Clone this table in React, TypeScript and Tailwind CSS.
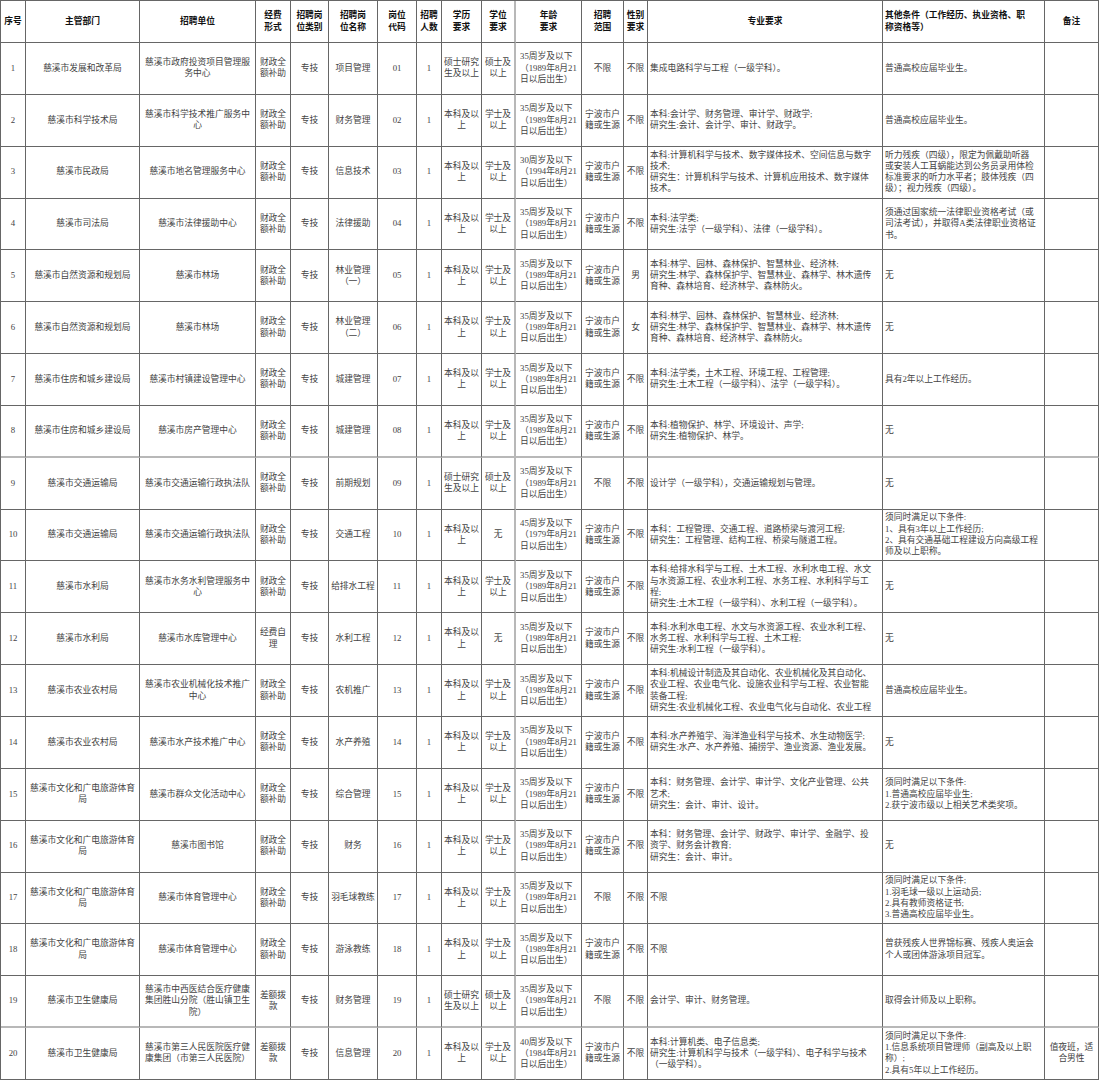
const A35 = "35周岁及以下\n（1989年8月21\n日以后出生）";
const CZ = "财政全\n额补助";
const BK = "本科及以\n上";
const XS = "学士及\n以上";
const SS = "硕士研究\n生及以上";
const SW = "硕士及\n以上";
const NB = "宁波市户\n籍或生源";
const WH = "慈溪市文化和广电旅游体育\n局";

const header = [
  "序号",
  "主管部门",
  "招聘单位",
  "经费\n形式",
  "招聘岗\n位类别",
  "招聘岗\n位名称",
  "岗位\n代码",
  "招聘\n人数",
  "学历\n要求",
  "学位\n要求",
  "年龄\n要求",
  "招聘\n范围",
  "性别\n要求",
  "专业要求",
  "其他条件（工作经历、执业资格、职\n称资格等）",
  "备注",
];

const rows: string[][] = [
  ["1", "慈溪市发展和改革局", "慈溪市政府投资项目管理服\n务中心", CZ, "专技", "项目管理", "01", "1", SS, SW, A35, "不限", "不限", "集成电路科学与工程（一级学科）。", "普通高校应届毕业生。", ""],
  ["2", "慈溪市科学技术局", "慈溪市科学技术推广服务中\n心", CZ, "专技", "财务管理", "02", "1", BK, XS, A35, NB, "不限", "本科:会计学、财务管理、审计学、财政学;\n研究生:会计、会计学、审计、财政学。", "普通高校应届毕业生。", ""],
  ["3", "慈溪市民政局", "慈溪市地名管理服务中心", CZ, "专技", "信息技术", "03", "1", BK, XS, "30周岁及以下\n（1994年8月21\n日以后出生）", NB, "不限", "本科:计算机科学与技术、数字媒体技术、空间信息与数字\n技术;\n研究生：计算机科学与技术、计算机应用技术、数字媒体\n技术。", "听力残疾（四级），限定为佩戴助听器\n或安装人工耳蜗能达到公务员录用体检\n标准要求的听力水平者；肢体残疾（四\n级）；视力残疾（四级）。", ""],
  ["4", "慈溪市司法局", "慈溪市法律援助中心", CZ, "专技", "法律援助", "04", "1", BK, XS, A35, NB, "不限", "本科:法学类;\n研究生:法学（一级学科）、法律（一级学科）。", "须通过国家统一法律职业资格考试（或\n司法考试），并取得A类法律职业资格证\n书。", ""],
  ["5", "慈溪市自然资源和规划局", "慈溪市林场", CZ, "专技", "林业管理\n（一）", "05", "1", BK, XS, A35, NB, "男", "本科:林学、园林、森林保护、智慧林业、经济林;\n研究生:林学、森林保护学、智慧林业、森林学、林木遗传\n育种、森林培育、经济林学、森林防火。", "无", ""],
  ["6", "慈溪市自然资源和规划局", "慈溪市林场", CZ, "专技", "林业管理\n（二）", "06", "1", BK, XS, A35, NB, "女", "本科:林学、园林、森林保护、智慧林业、经济林;\n研究生:林学、森林保护学、智慧林业、森林学、林木遗传\n育种、森林培育、经济林学、森林防火。", "无", ""],
  ["7", "慈溪市住房和城乡建设局", "慈溪市村镇建设管理中心", CZ, "专技", "城建管理", "07", "1", BK, XS, A35, NB, "不限", "本科:法学类，土木工程、环境工程、工程管理;\n研究生:土木工程（一级学科）、法学（一级学科）。", "具有2年以上工作经历。", ""],
  ["8", "慈溪市住房和城乡建设局", "慈溪市房产管理中心", CZ, "专技", "城建管理", "08", "1", BK, XS, A35, NB, "不限", "本科:植物保护、林学、环境设计、声学;\n研究生:植物保护、林学。", "无", ""],
  ["9", "慈溪市交通运输局", "慈溪市交通运输行政执法队", CZ, "专技", "前期规划", "09", "1", SS, SW, A35, "不限", "不限", "设计学（一级学科），交通运输规划与管理。", "无", ""],
  ["10", "慈溪市交通运输局", "慈溪市交通运输行政执法队", CZ, "专技", "交通工程", "10", "1", BK, "无", "45周岁及以下\n（1979年8月21\n日以后出生）", NB, "不限", "本科：工程管理、交通工程、道路桥梁与渡河工程;\n研究生：工程管理、结构工程、桥梁与隧道工程。", "须同时满足以下条件:\n1、具有3年以上工作经历;\n2、具有交通基础工程建设方向高级工程\n师及以上职称。", ""],
  ["11", "慈溪市水利局", "慈溪市水务水利管理服务中\n心", CZ, "专技", "给排水工程", "11", "1", BK, XS, A35, NB, "不限", "本科:给排水科学与工程、土木工程、水利水电工程、水文\n与水资源工程、农业水利工程、水务工程、水利科学与工\n程;\n研究生:土木工程（一级学科）、水利工程（一级学科）。", "无", ""],
  ["12", "慈溪市水利局", "慈溪市水库管理中心", "经费自\n理", "专技", "水利工程", "12", "1", BK, "无", A35, NB, "不限", "本科:水利水电工程、水文与水资源工程、农业水利工程、\n水务工程、水利科学与工程、土木工程;\n研究生:水利工程（一级学科）。", "无", ""],
  ["13", "慈溪市农业农村局", "慈溪市农业机械化技术推广\n中心", CZ, "专技", "农机推广", "13", "1", BK, XS, A35, NB, "不限", "本科:机械设计制造及其自动化、农业机械化及其自动化、\n农业工程、农业电气化、设施农业科学与工程、农业智能\n装备工程;\n研究生:农业机械化工程、农业电气化与自动化、农业工程", "普通高校应届毕业生。", ""],
  ["14", "慈溪市农业农村局", "慈溪市水产技术推广中心", CZ, "专技", "水产养殖", "14", "1", BK, XS, A35, NB, "不限", "本科:水产养殖学、海洋渔业科学与技术、水生动物医学;\n研究生:水产、水产养殖、捕捞学、渔业资源、渔业发展。", "无", ""],
  ["15", WH, "慈溪市群众文化活动中心", CZ, "专技", "综合管理", "15", "1", BK, XS, A35, NB, "不限", "本科：财务管理、会计学、审计学、文化产业管理、公共\n艺术;\n研究生：会计、审计、设计。", "须同时满足以下条件:\n1.普通高校应届毕业生;\n2.获宁波市级以上相关艺术类奖项。", ""],
  ["16", WH, "慈溪市图书馆", CZ, "专技", "财务", "16", "1", BK, XS, A35, NB, "不限", "本科：财务管理、会计学、财政学、审计学、金融学、投\n资学、财务会计教育;\n研究生：会计、审计。", "无", ""],
  ["17", WH, "慈溪市体育管理中心", CZ, "专技", "羽毛球教练", "17", "1", BK, XS, A35, "不限", "不限", "不限", "须同时满足以下条件;\n1.羽毛球一级以上运动员;\n2.具有教师资格证书;\n3.普通高校应届毕业生。", ""],
  ["18", WH, "慈溪市体育管理中心", CZ, "专技", "游泳教练", "18", "1", BK, XS, A35, NB, "不限", "不限", "曾获残疾人世界锦标赛、残疾人奥运会\n个人或团体游泳项目冠军。", ""],
  ["19", "慈溪市卫生健康局", "慈溪市中西医结合医疗健康\n集团胜山分院（胜山镇卫生\n院）", "差额拨\n款", "专技", "财务管理", "19", "1", SS, SW, A35, "不限", "不限", "会计学、审计、财务管理。", "取得会计师及以上职称。", ""],
  ["20", "慈溪市卫生健康局", "慈溪市第三人民医院医疗健\n康集团（市第三人民医院）", "差额拨\n款", "专技", "信息管理", "20", "1", BK, XS, "40周岁及以下\n（1984年8月21\n日以后出生）", NB, "不限", "本科:计算机类、电子信息类;\n研究生:计算机科学与技术（一级学科）、电子科学与技术\n（一级学科）。", "须同时满足以下条件:\n1.信息系统项目管理师（副高及以上职\n称）;\n2.具有5年以上工作经历。", "值夜班，适\n合男性"],
];

// column 9 (学位要求) has the pale double rule on its right in the source sheet
function cellClass(col: number) {
  let c = "";
  if (col === 13 || col === 14) c = "justify-start text-left pl-[2px]";
  else if (col === 10) c = "justify-start text-left pl-[4px]";
  else c = "justify-center text-center";
  if (col === 9) c += " border-r-2 border-r-[#b8b8b8]";
  else c += " border-r border-r-[#666]";
  return c;
}

function rowBorder(ri: number) {
  // rows 8 and 19 close with a paler, heavier rule
  return ri === 7 || ri === 18 ? "border-b-2 border-b-[#b8b8b8]" : "border-b border-b-[#666]";
}

export default function App() {
  return (
    <div className="w-[1099px] h-[1080px] overflow-hidden bg-white font-['Liberation_Serif','Noto_Sans_CJK_SC',serif]">
      <div className="grid grid-cols-[25px_114px_116px_35px_38px_49px_39px_25px_40px_34px_66px_42px_24px_235px_162px_54px] grid-rows-[42px_repeat(20,51.85px)] border-l border-t border-[#666] text-[8.75px] leading-[11.3px] text-[#444]">
        {header.map((h, i) => (
          <div
            key={"h" + i}
            className={`flex items-center overflow-hidden whitespace-pre border-b border-b-[#666] font-bold text-[#111] ${
              i === 14 ? "justify-start text-left pl-[2px]" : "justify-center text-center"
            } ${i === 9 ? "border-r-2 border-r-[#b8b8b8]" : "border-r border-r-[#666]"}`}
          >
            {h}
          </div>
        ))}
        {rows.map((r, ri) =>
          r.map((c, ci) => (
            <div
              key={ri + "-" + ci}
              className={`flex items-center overflow-hidden whitespace-pre ${rowBorder(ri)} ${cellClass(ci)}`}
            >
              {c}
            </div>
          ))
        )}
      </div>
    </div>
  );
}
